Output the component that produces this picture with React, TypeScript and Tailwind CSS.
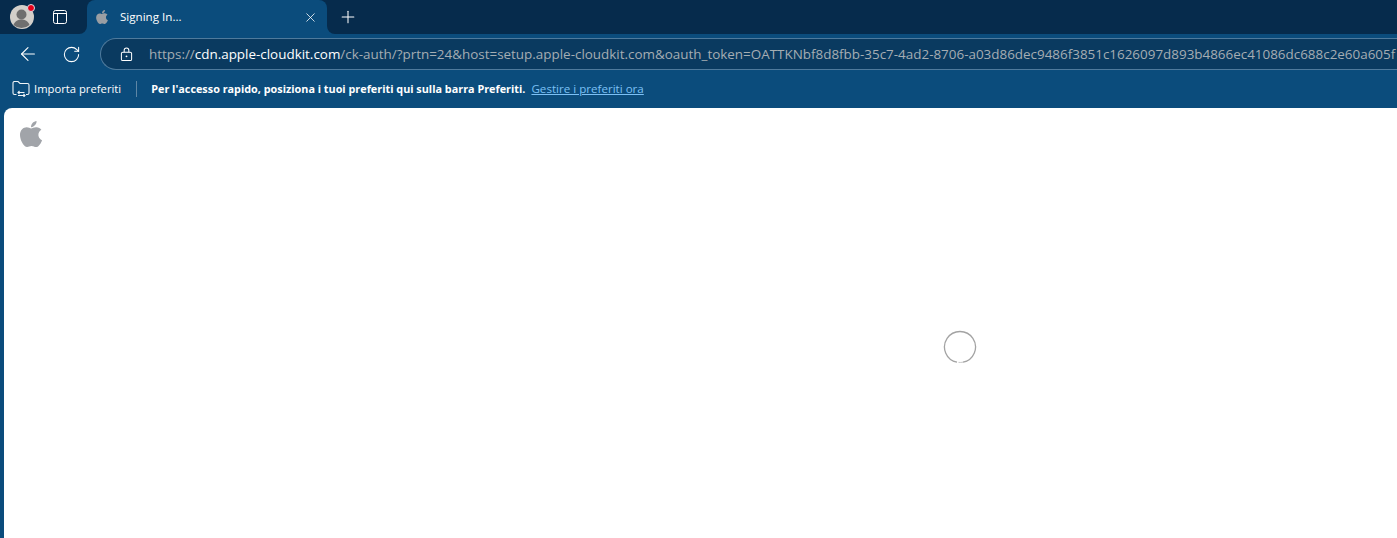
import { FaApple } from "react-icons/fa";
import { ArrowLeft, RotateCw, X, Plus } from "lucide-react";

const font = "font-['Open_Sans','Noto_Sans',sans-serif]";

function Avatar() {
  return (
    <div className="relative w-[24px] h-[24px]">
      <svg viewBox="0 0 24 24" className="w-[24px] h-[24px]">
        <circle cx="12" cy="12" r="12" fill="#d2cfca" />
        <circle cx="11.5" cy="9.5" r="5" fill="#6f6f6f" />
        <path d="M3.5 20c1.5-4 4.5-5.500 8-5.500s6.500 1.500 8 5.500a12 12 0 0 1-16 0z" fill="#6f6f6f" />
      </svg>
      <div className="absolute -top-[1px] -right-[1px] w-[8px] h-[8px] rounded-full bg-[#e6001a] border border-[#d8e0e6]" />
    </div>
  );
}

function TabsIcon() {
  return (
    <svg viewBox="0 0 14 14" className="w-[14px] h-[14px]" fill="none" stroke="#fff" strokeWidth="1">
      <rect x="0.5" y="0.5" width="13" height="13" rx="2" />
      <path d="M0.500 3.500h13M4.500 3.500v10" />
    </svg>
  );
}

function LockIcon() {
  return (
    <svg viewBox="0 0 14 16" className="w-[13px] h-[15px]" fill="none" stroke="#fff" strokeWidth="1.100">
      <rect x="1.500" y="5.500" width="11" height="9" rx="1.500" />
      <path d="M4.500 5.500V3.500a2.500 2.500 0 0 1 5 0v2" />
      <circle cx="7" cy="10" r="1" fill="#fff" stroke="none" />
    </svg>
  );
}

function ImportIcon() {
  return (
    <svg viewBox="0 0 18 16" className="w-[18px] h-[16px]" fill="none" stroke="#f0f4f7" strokeWidth="1.100">
      <path d="M4.500 13.500H2.500a1.500 1.500 0 0 1-1.500-1.500V2a1.500 1.500 0 0 1 1.500-1.500H6l2 2h7.500a1.500 1.500 0 0 1 1.500 1.500V12a1.500 1.500 0 0 1-1.500 1.500H14" />
      <path d="M6 11.500h6.500M7.500 10L6 11.500 7.500 13M6 14.500h7M11.500 13l1.500 1.500-1.500 1.500" />
    </svg>
  );
}

export default function App() {
  return (
    <div className={`h-[538px] w-[1397px] overflow-hidden flex flex-col bg-[#0b4c7c] ${font}`}>
      {/* Tab strip */}
      <div className="h-[34px] flex shrink-0">
        <div className="w-[87px] bg-[#062b4c] rounded-br-lg flex items-center">
          <div className="ml-[10px]">
            <Avatar />
          </div>
          <div className="ml-[19px]">
            <TabsIcon />
          </div>
        </div>
        <div className="w-[240px] bg-[#062b4c]">
          <div className="h-full bg-[#0b4c7c] rounded-t-lg flex items-center">
            <FaApple className="ml-[7px] w-[16px] h-[16px] text-[#9a9ea3]" />
            <span className="ml-[10px] text-[11.6px] text-white flex-1">Signing In...</span>
            <X className="mr-[9px] w-[15px] h-[15px] text-white" strokeWidth={1.25} />
          </div>
        </div>
        <div className="flex-1 bg-[#062b4c] rounded-bl-lg flex items-center">
          <Plus className="ml-[11px] w-[20px] h-[20px] text-white" strokeWidth={1.25} />
        </div>
      </div>

      {/* Address bar */}
      <div className="h-[36px] pt-[4px] flex items-center shrink-0">
        <ArrowLeft className="ml-[17px] w-[22px] h-[22px] text-white" strokeWidth={1.2} />
        <RotateCw className="ml-[23px] w-[19px] h-[19px] text-white" strokeWidth={1.3} />
        <div className="ml-[19px] flex-1 min-w-0 h-[32px] bg-[#0a3a60] border border-[#4f7a9c] border-r-0 rounded-l-full flex items-center overflow-hidden">
          <div className="ml-[19px] shrink-0">
            <LockIcon />
          </div>
          <div className="ml-[16px] text-[13.43px] whitespace-nowrap text-[#a5adb3]">
            https://<span className="text-white">cdn.apple-cloudkit.com</span>/ck-auth/?prtn=24&amp;host=setup.apple-cloudkit.com&amp;oauth_token=OATTKNbf8d8fbb-35c7-4ad2-8706-a03d86dec9486f3851c1626097d893b4866ec41086dc688c2e60a605f
          </div>
        </div>
      </div>

      {/* Favorites bar */}
      <div className="h-[38px] flex items-center shrink-0 text-white">
        <div className="ml-[12px]">
          <ImportIcon />
        </div>
        <span className="ml-[4px] text-[11.25px]">Importa preferiti</span>
        <div className="ml-[15px] w-px h-[16px] bg-[#5e86a5]" />
        <span className="ml-[14px] font-bold text-[10.83px]">Per l'accesso rapido, posiziona i tuoi preferiti qui sulla barra Preferiti.</span>
        <span className="ml-[6px] text-[11.6px] text-[#7cc0f5] underline">Gestire i preferiti ora</span>
      </div>

      {/* Page */}
      <div className="flex-1 ml-[4px] bg-white rounded-tl-lg flex flex-col min-h-0">
        <div className="h-[48px] shrink-0 pl-[12px] pt-[11px]">
          <FaApple className="w-[30px] h-[30px] text-[#a1a4a9]" />
        </div>
        <div className="flex-1 flex">
          <div className="w-[519px]" />
          <div className="flex-1 flex items-center justify-center">
            <svg viewBox="0 0 34 34" className="w-[34px] h-[34px]" fill="none">
              <path d="M14 32.200A15.500 15.500 0 1 1 20 32.200" stroke="#a3a3a3" strokeWidth="1.300" />
              <path d="M15.500 32.400a15.500 15.500 0 0 0 4.500 -0.200" stroke="#c9c9c9" strokeWidth="1" />
            </svg>
          </div>
        </div>
      </div>
    </div>
  );
}
